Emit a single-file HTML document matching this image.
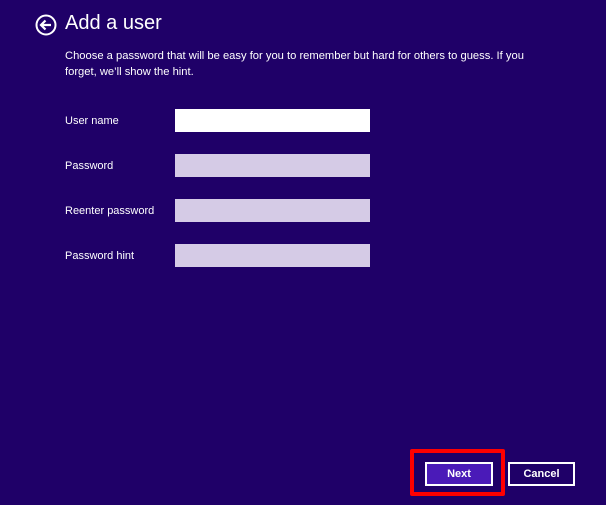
<!DOCTYPE html>
<html><head><style>
body{margin:0;width:606px;height:505px;background:#1f0068;font-family:"Liberation Sans",sans-serif;color:#fff;position:relative;overflow:hidden}
.a{position:absolute}
.lbl{position:absolute;left:65px;font-size:11px}
.f{position:absolute;left:175px;width:195px;height:23px;background:#d5cbe6}
.btn{position:absolute;top:462px;height:24px;border:2px solid #fff;box-sizing:border-box;font-size:11px;font-weight:bold;text-align:center;line-height:20px}
</style></head><body>
<svg class="a" style="left:35px;top:14px" width="22" height="22" viewBox="0 0 22 22"><circle cx="11" cy="11" r="9.5" fill="none" stroke="#fff" stroke-width="2"/><path d="M16 11H6M10.5 6.5L6 11l4.5 4.5" fill="none" stroke="#fff" stroke-width="2.2"/></svg>
<div class="a" style="left:65px;top:12px;font-size:20px">Add a user</div>
<div class="a" style="left:65px;top:48px;font-size:11.2px;line-height:16px;width:490px">Choose a password that will be easy for you to remember but hard for others to guess. If you forget, we’ll show the hint.</div>
<div class="lbl" style="top:115px">User name</div>
<div class="f" style="top:109px;background:#fff"></div>
<div class="lbl" style="top:160px">Password</div>
<div class="f" style="top:154px"></div>
<div class="lbl" style="top:205px">Reenter password</div>
<div class="f" style="top:199px"></div>
<div class="lbl" style="top:250px">Password hint</div>
<div class="f" style="top:244px"></div>
<div class="a" style="left:410px;top:449px;width:95px;height:47px;border:4px solid #f00;box-sizing:border-box;border-radius:2px"></div>
<div class="btn" style="left:425px;width:68px;background:#4a1ab8">Next</div>
<div class="btn" style="left:508px;width:67px;background:#1f0068">Cancel</div>
</body></html>
